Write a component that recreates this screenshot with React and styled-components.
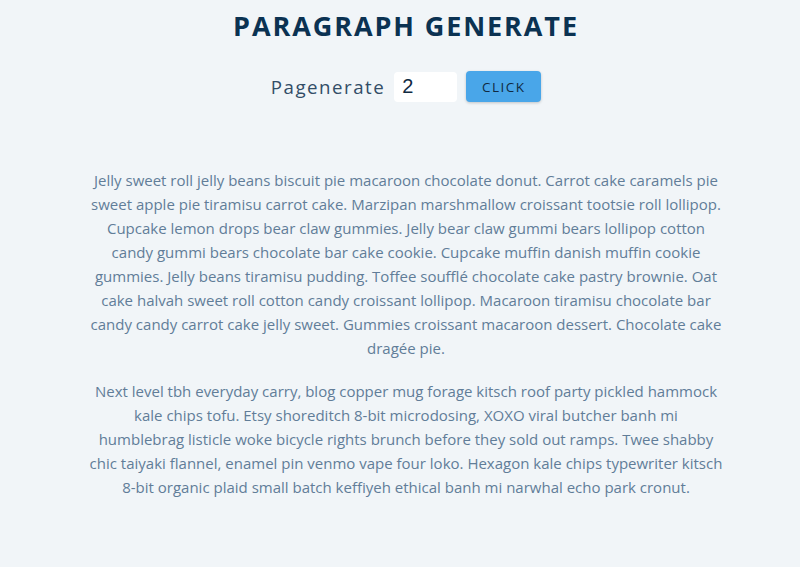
import React, { useState } from 'react'
import styled, { createGlobalStyle } from 'styled-components'

const GlobalStyle = createGlobalStyle`
  * { box-sizing: border-box; }
  body {
    margin: 0;
    background: #f1f5f8;
    font-family: "Open Sans", "Noto Sans", sans-serif;
    color: #102a42;
  }
`

const Main = styled.main`
  padding-left: 12px;
`

const Section = styled.section`
  width: 90vw;
  max-width: 640px;
  margin: 0 auto;
  padding-top: 8px;
  text-align: center;
`

const Title = styled.h3`
  margin: 0;
  font-size: 27px;
  font-weight: 700;
  letter-spacing: 1.9px;
  text-transform: uppercase;
  color: #0b3252;
  line-height: 36px;
`

const Form = styled.form`
  display: flex;
  justify-content: center;
  align-items: center;
  gap: 9px;
  margin-top: 27px;
`

const Label = styled.label`
  font-size: 18.7px;
  letter-spacing: 1.5px;
  color: #324d67;
`

const NumberInput = styled.input`
  width: 63px;
  height: 30px;
  border: none;
  border-radius: 4px;
  background: #fff;
  padding: 0 8px;
  font-family: "Liberation Sans", Arial, sans-serif;
  font-size: 20px;
  color: #102a42;
  outline: none;
`

const Button = styled.button`
  width: 75px;
  height: 31px;
  border: none;
  border-radius: 4px;
  background: #49a6e9;
  color: #102a42;
  font-family: "Open Sans", sans-serif;
  font-size: 13.5px;
  letter-spacing: 1.5px;
  text-transform: uppercase;
  box-shadow: 0 1px 3px rgba(0, 0, 0, 0.2);
  cursor: pointer;
`

const Article = styled.article`
  margin-top: 66px;
`

const Paragraph = styled.p`
  margin: 0 0 19px;
  font-size: 15px;
  line-height: 24px;
  color: #617d98;
`

const text = [
  'Jelly sweet roll jelly beans biscuit pie macaroon chocolate donut. Carrot cake caramels pie sweet apple pie tiramisu carrot cake. Marzipan marshmallow croissant tootsie roll lollipop. Cupcake lemon drops bear claw gummies. Jelly bear claw gummi bears lollipop cotton candy gummi bears chocolate bar cake cookie. Cupcake muffin danish muffin cookie gummies. Jelly beans tiramisu pudding. Toffee soufflé chocolate cake pastry brownie. Oat cake halvah sweet roll cotton candy croissant lollipop. Macaroon tiramisu chocolate bar candy candy carrot cake jelly sweet. Gummies croissant macaroon dessert. Chocolate cake dragée pie.',
  'Next level tbh everyday carry, blog copper mug forage kitsch roof party pickled hammock kale chips tofu. Etsy shoreditch 8-bit microdosing, XOXO viral butcher banh mi humblebrag\u00a0listicle woke bicycle rights brunch before they sold out ramps. Twee shabby chic taiyaki flannel, enamel pin venmo vape four loko. Hexagon kale chips typewriter kitsch 8-bit organic plaid small batch keffiyeh ethical banh mi narwhal echo park cronut.',
]

export default function App() {
  const [count, setCount] = useState(2)
  const [paragraphs, setParagraphs] = useState(text)

  const handleSubmit = (e) => {
    e.preventDefault()
    let amount = parseInt(count)
    if (amount <= 0) amount = 1
    if (amount > text.length) amount = text.length
    setParagraphs(text.slice(0, amount))
  }

  return (
    <>
      <GlobalStyle />
      <Main>
        <Section>
          <Title>paragraph generate</Title>
          <Form onSubmit={handleSubmit}>
            <Label htmlFor="amount">Pagenerate</Label>
            <NumberInput
              type="number"
              id="amount"
              value={count}
              onChange={(e) => setCount(e.target.value)}
            />
            <Button type="submit">click</Button>
          </Form>
          <Article>
            {paragraphs.map((item, i) => (
              <Paragraph key={i}>{item}</Paragraph>
            ))}
          </Article>
        </Section>
      </Main>
    </>
  )
}
